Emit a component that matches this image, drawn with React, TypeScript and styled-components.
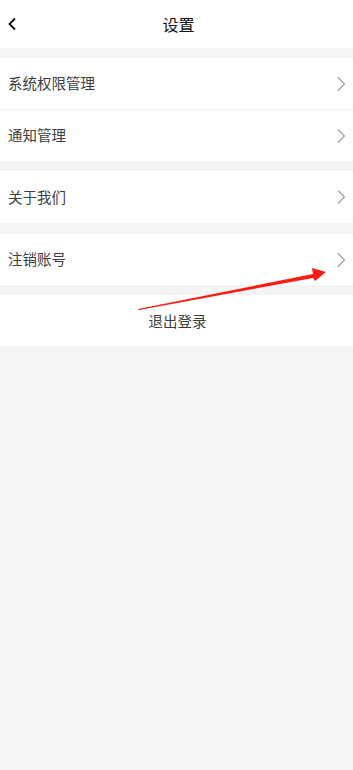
import React from "react";
import styled, { createGlobalStyle } from "styled-components";

const Global = createGlobalStyle`
  html, body { margin: 0; padding: 0; background: #f4f4f4; }
  body { font-family: "Noto Sans CJK SC", "Noto Sans", sans-serif; }
  * { box-sizing: border-box; }
`;

const Page = styled.div`
  position: relative;
  width: 353px;
  min-height: 770px;
  background: #f4f4f4;
  display: flex;
  flex-direction: column;
`;

const Header = styled.header`
  height: 48px;
  background: #fff;
  display: flex;
  align-items: center;
  justify-content: center;
  position: relative;
`;

const BackButton = styled.button`
  position: absolute;
  left: 4px;
  top: 15px;
  width: 16px;
  height: 18px;
  padding: 0;
  border: 0;
  background: none;
  display: flex;
  align-items: center;
  justify-content: center;
`;

const Title = styled.h1`
  margin: 0;
  font-size: 16px;
  font-weight: 400;
  color: #111;
  line-height: 1;
  transform: translateX(2px);
`;

const Group = styled.section<{ $top: number }>`
  margin-top: ${(p) => p.$top}px;
  background: #fff;
  display: flex;
  flex-direction: column;
`;

const Row = styled.div<{ $divider?: boolean; $h?: number }>`
  height: ${(p) => p.$h ?? 52}px;
  display: flex;
  align-items: center;
  justify-content: space-between;
  padding: 0 7px 0 8px;
  border-bottom: ${(p) => (p.$divider ? "1px solid #efefef" : "none")};
`;

const Label = styled.span`
  font-size: 14.5px;
  color: #3d3d3d;
  line-height: 1;
`;

const Logout = styled.div`
  height: 51px;
  display: flex;
  align-items: center;
  justify-content: center;
  font-size: 14.5px;
  color: #3d3d3d;
  padding-left: 2px;
`;

const Overlay = styled.svg`
  position: absolute;
  left: 0;
  top: 0;
  pointer-events: none;
`;

const Chevron = () => (
  <svg width="10" height="16" viewBox="0 0 10 16">
    <path d="M2 1.5 L8.5 8 L2 14.5" fill="none" stroke="#9a9a9a" strokeWidth="1.1" />
  </svg>
);

export default function App() {
  return (
    <>
      <Global />
      <Page>
        <Header>
          <BackButton aria-label="back">
            <svg width="10" height="14" viewBox="0 0 10 14">
              <path d="M8 1.5 L2.5 7 L8 12.5" fill="none" stroke="#111" strokeWidth="1.8" />
            </svg>
          </BackButton>
          <Title>设置</Title>
        </Header>
        <Group $top={10}>
          <Row $divider>
            <Label>系统权限管理</Label>
            <Chevron />
          </Row>
          <Row $h={51}>
            <Label>通知管理</Label>
            <Chevron />
          </Row>
        </Group>
        <Group $top={10}>
          <Row>
            <Label>关于我们</Label>
            <Chevron />
          </Row>
        </Group>
        <Group $top={11}>
          <Row $h={51}>
            <Label>注销账号</Label>
            <Chevron />
          </Row>
        </Group>
        <Group $top={10}>
          <Logout>退出登录</Logout>
        </Group>
        <Overlay width="353" height="770" viewBox="0 0 353 770">
          <polygon
            points="138,309 313,274 312,268 326,272 315,281 313,278 139,310"
            fill="#ff1a12"
          />
        </Overlay>
      </Page>
    </>
  );
}
